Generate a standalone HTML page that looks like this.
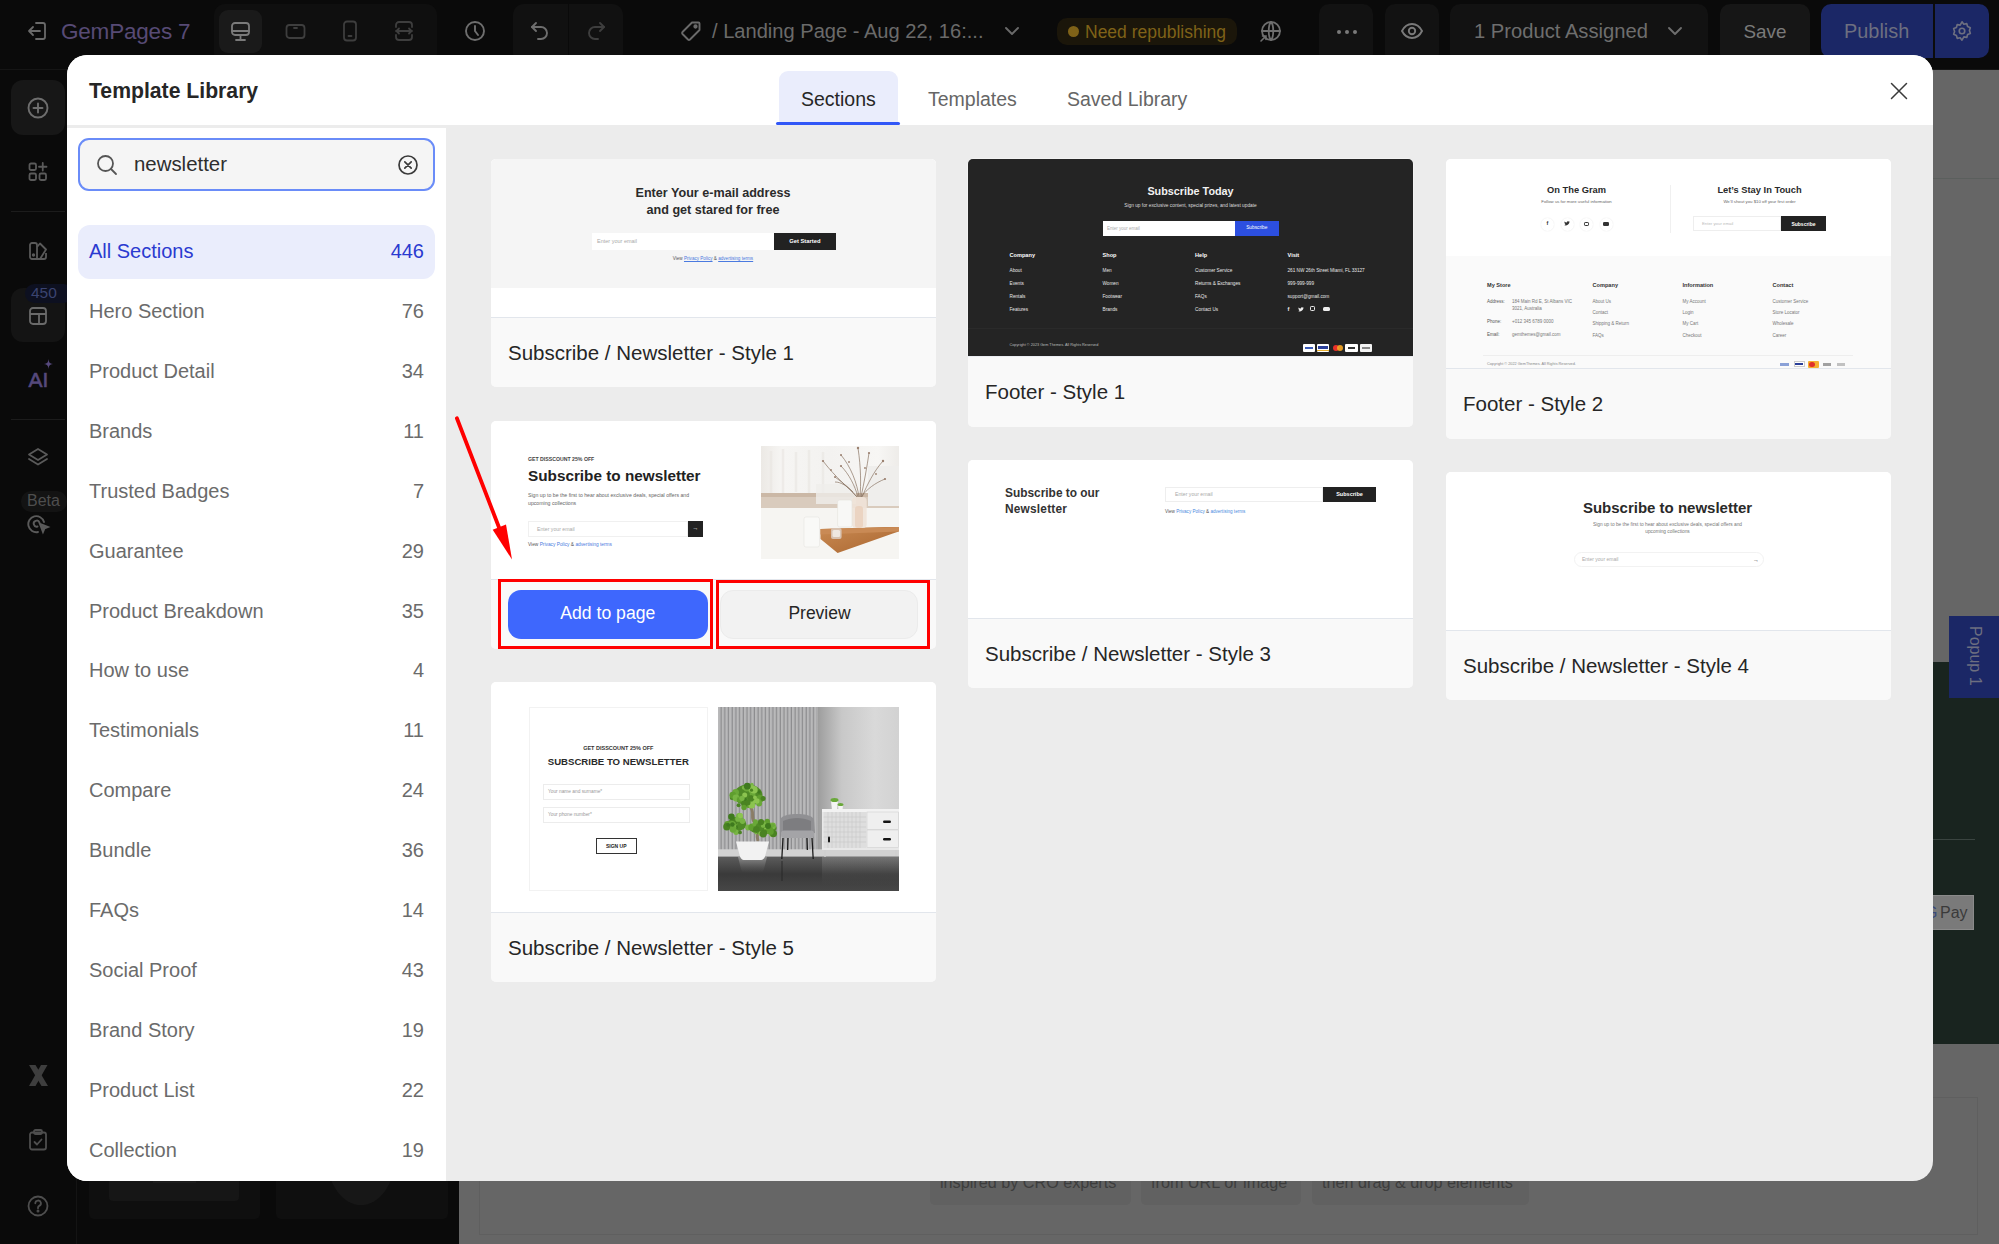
<!DOCTYPE html>
<html><head><meta charset="utf-8">
<style>
*{box-sizing:border-box;margin:0;padding:0}
html,body{width:1999px;height:1244px;overflow:hidden;background:#0a0a0a;font-family:"Liberation Sans",sans-serif}
.abs{position:absolute}
#top{left:0;top:0;width:1999px;height:70px;background:#0a0a0a;border-bottom:1px solid #151515}
#side{left:0;top:70px;width:77px;height:1174px;background:#0a0a0a;border-right:1px solid #141414}
#canvas{left:459px;top:70px;width:1540px;height:1174px;background:#666}
#modal{left:67px;top:55px;width:1866px;height:1126px;background:#ececec;border-radius:20px;overflow:hidden}
#mhead{left:0;top:0;width:1866px;height:70px;background:#fff}
#lpanel{left:0;top:73px;width:379px;height:1053px;background:#fff}
.tb{color:#2a2a2a}
.item{position:absolute;left:11px;width:357px;height:54px;font-size:20px;color:#6b6b6b;border-radius:12px}
.item span{position:absolute;top:15px}
.item .n{right:11px}
.item .l{left:11px}
.card{position:absolute;width:445px;background:#f9f9f9;border-radius:5px;overflow:hidden}
.card .img{position:absolute;left:0;top:0;width:100%;background:#fff}
.card .lab{position:absolute;left:0;width:100%;border-top:1px solid #e2e6ec;background:#f9f9f9}
.card .lab span{position:absolute;left:17px;font-size:20.5px;color:#262626;top:23.3px;white-space:nowrap}
</style></head><body>
<div id="top" class="abs">
  <svg class="abs" style="left:26px;top:20px" width="22" height="22" viewBox="0 0 22 22" fill="none" stroke="#6a6a6a" stroke-width="1.8" stroke-linecap="round" stroke-linejoin="round"><path d="M10 3h7a2 2 0 0 1 2 2v12a2 2 0 0 1-2 2h-7"/><path d="M14 11H3M7 7l-4 4 4 4"/></svg>
  <div class="abs" style="left:61px;top:18.5px;font-size:22.5px;color:#574a75;letter-spacing:-0.2px">GemPages 7</div>
  <div class="abs" style="left:214px;top:4px;width:223px;height:60px;background:#0f0f0f;border-radius:11px"></div>
  <div class="abs" style="left:219px;top:10px;width:43px;height:43px;background:#1a1a1a;border-radius:9px"></div>
  <svg class="abs" style="left:230px;top:21px" width="21" height="21" viewBox="0 0 21 21" fill="none" stroke="#7a7a7a" stroke-width="1.8" stroke-linecap="round" stroke-linejoin="round"><rect x="2" y="2" width="17" height="12" rx="3"/><path d="M2 10h17M10.5 14v4M6 19h9"/></svg>
  <svg class="abs" style="left:285px;top:21px" width="21" height="21" viewBox="0 0 21 21" fill="none" stroke="#3e3e3e" stroke-width="1.8" stroke-linecap="round"><rect x="1.5" y="4" width="18" height="13" rx="3"/><path d="M9 7h3"/></svg>
  <svg class="abs" style="left:340px;top:20px" width="20" height="22" viewBox="0 0 20 22" fill="none" stroke="#3e3e3e" stroke-width="1.8" stroke-linecap="round"><rect x="4" y="1.5" width="12" height="19" rx="3"/><path d="M8.5 16h3"/></svg>
  <svg class="abs" style="left:393px;top:20px" width="22" height="22" viewBox="0 0 22 22" fill="none" stroke="#3e3e3e" stroke-width="1.8" stroke-linecap="round" stroke-linejoin="round"><path d="M3 7V5a3 3 0 0 1 3-3h10a3 3 0 0 1 3 3v2M3 15v2a3 3 0 0 0 3 3h10a3 3 0 0 0 3-3v-2M3 11h16M6 8.5 3.5 11 6 13.5M16 8.5l2.5 2.5-2.5 2.5"/></svg>
  <svg class="abs" style="left:464px;top:20px" width="22" height="22" viewBox="0 0 22 22" fill="none" stroke="#6e6e6e" stroke-width="1.9" stroke-linecap="round"><circle cx="11" cy="11" r="9"/><path d="M11 6v5l3 4"/></svg>
  <div class="abs" style="left:513px;top:4px;width:110px;height:60px;background:#111;border-radius:11px"></div>
  <div class="abs" style="left:567.5px;top:4px;width:1px;height:60px;background:#0a0a0a"></div>
  <svg class="abs" style="left:529px;top:20px" width="22" height="22" viewBox="0 0 22 22" fill="none" stroke="#6e6e6e" stroke-width="1.9" stroke-linecap="round" stroke-linejoin="round"><path d="M7 3 3 7l4 4"/><path d="M3 7h9a6 6 0 0 1 0 12H9"/></svg>
  <svg class="abs" style="left:585px;top:20px" width="22" height="22" viewBox="0 0 22 22" fill="none" stroke="#3e3e3e" stroke-width="1.9" stroke-linecap="round" stroke-linejoin="round"><path d="M15 3l4 4-4 4"/><path d="M19 7h-9a6 6 0 0 0 0 12h3"/></svg>
  <svg class="abs" style="left:680px;top:20px" width="22" height="22" viewBox="0 0 22 22" fill="none" stroke="#6a6a6a" stroke-width="1.9" stroke-linejoin="round"><path d="M12 2.5h6.5a1 1 0 0 1 1 1V10L10 19.5a1.5 1.5 0 0 1-2 0L2.5 14a1.5 1.5 0 0 1 0-2z"/><circle cx="15.5" cy="6.5" r="1.2" fill="#6a6a6a"/></svg>
  <div class="abs" style="left:712px;top:19.5px;font-size:20.1px;color:#6a6a6a;white-space:nowrap">/ Landing Page - Aug 22, 16:...</div>
  <svg class="abs" style="left:1003px;top:24px" width="18" height="14" viewBox="0 0 18 14" fill="none" stroke="#6a6a6a" stroke-width="1.9" stroke-linecap="round" stroke-linejoin="round"><path d="M3 4l6 6 6-6"/></svg>
  <div class="abs" style="left:1057px;top:18px;width:180px;height:27px;background:#1b160a;border-radius:10px"></div>
  <div class="abs" style="left:1068px;top:26px;width:11px;height:11px;background:#7f6218;border-radius:50%"></div>
  <div class="abs" style="left:1085px;top:21.5px;font-size:17.5px;color:#7f6218;white-space:nowrap">Need republishing</div>
  <svg class="abs" style="left:1259px;top:20px" width="23" height="23" viewBox="0 0 23 23" fill="none" stroke="#6e6e6e" stroke-width="1.8" stroke-linecap="round"><circle cx="12" cy="11" r="9"/><path d="M3 11h18M12 2c-3 3-3 15 0 18M12 2c3 3 3 15 0 18"/><path d="M2 21l5-5M3.5 16h3.5v3.5" stroke-width="1.6"/></svg>
  <div class="abs" style="left:1319px;top:4px;width:54px;height:60px;background:#121212;border-radius:10px"></div>
  <div class="abs" style="left:1337px;top:30px;width:4px;height:4px;background:#7a7a7a;border-radius:50%;box-shadow:8px 0 0 #7a7a7a,16px 0 0 #7a7a7a"></div>
  <div class="abs" style="left:1385px;top:4px;width:54px;height:60px;background:#121212;border-radius:10px"></div>
  <svg class="abs" style="left:1400px;top:20px" width="24" height="22" viewBox="0 0 24 22" fill="none" stroke="#7a7a7a" stroke-width="1.9"><path d="M2 11c2.5-5 6-7 10-7s7.5 2 10 7c-2.5 5-6 7-10 7s-7.5-2-10-7z"/><circle cx="12" cy="11" r="3.2"/></svg>
  <div class="abs" style="left:1450px;top:4px;width:258px;height:60px;background:#121212;border-radius:10px"></div>
  <div class="abs" style="left:1474px;top:19.5px;font-size:20.2px;color:#6e6e6e;white-space:nowrap">1 Product Assigned</div>
  <svg class="abs" style="left:1666px;top:24px" width="18" height="14" viewBox="0 0 18 14" fill="none" stroke="#6e6e6e" stroke-width="1.9" stroke-linecap="round" stroke-linejoin="round"><path d="M3 4l6 6 6-6"/></svg>
  <div class="abs" style="left:1720px;top:4px;width:90px;height:60px;background:#161616;border-radius:10px"></div>
  <div class="abs" style="left:1743.5px;top:20.5px;font-size:18.85px;color:#7a7a7a">Save</div>
  <div class="abs" style="left:1821px;top:4px;width:168px;height:54px;background:#1b2766;border-radius:10px"></div>
  <div class="abs" style="left:1933px;top:4px;width:2px;height:54px;background:#0c0c0c"></div>
  <div class="abs" style="left:1844px;top:19.5px;font-size:19.9px;color:#6d6f80">Publish</div>
  <svg class="abs" style="left:1951px;top:20px" width="22" height="22" viewBox="0 0 24 24" fill="none" stroke="#6d6f80" stroke-width="1.8" stroke-linejoin="round"><circle cx="12" cy="12" r="3"/><path d="M12 2l2 2.6 3.2-.6.9 3.1 3 1.3-1 3.1 1 3.1-3 1.3-.9 3.1-3.2-.6L12 22l-2-2.6-3.2.6-.9-3.1-3-1.3 1-3.1-1-3.1 3-1.3.9-3.1 3.2.6z"/></svg>
</div>
<div id="side" class="abs">
  <div class="abs" style="left:11px;top:10px;width:54px;height:55px;background:#171717;border-radius:12px"></div>
  <svg class="abs" style="left:27px;top:27px" width="22" height="22" viewBox="0 0 22 22" fill="none" stroke="#6e6e6e" stroke-width="1.9" stroke-linecap="round"><circle cx="11" cy="11" r="9.5"/><path d="M11 6.5v9M6.5 11h9"/></svg>
  <svg class="abs" style="left:28px;top:92px" width="20" height="20" viewBox="0 0 20 20" fill="none" stroke="#5a5a5a" stroke-width="1.8" stroke-linejoin="round" stroke-linecap="round"><rect x="1.5" y="1.5" width="6.5" height="6.5" rx="1.5"/><rect x="1.5" y="11.5" width="6.5" height="6.5" rx="1.5"/><rect x="11.5" y="11.5" width="6.5" height="6.5" rx="1.5"/><path d="M14.75 1v7.5M11 4.75h7.5"/></svg>
  <div class="abs" style="left:11px;top:141px;width:54px;height:1px;background:#1c1c1c"></div>
  <svg class="abs" style="left:28px;top:171px" width="20" height="20" viewBox="0 0 20 20" fill="none" stroke="#5a5a5a" stroke-width="1.8" stroke-linejoin="round"><path d="M2 4a2 2 0 0 1 2-2h3a2 2 0 0 1 2 2v14H4a2 2 0 0 1-2-2z"/><path d="M9 6l3-3.5 6 6L12 18H9"/><path d="M9 18h7a2 2 0 0 0 2-2v-4"/><circle cx="5.5" cy="14" r="0.8" fill="#5a5a5a"/></svg>
  <div class="abs" style="left:11px;top:218px;width:54px;height:54px;background:#141414;border-radius:12px"></div>
  <div class="abs" style="left:25px;top:214px;width:48px;height:19px;background:#0d1020;border-radius:10px"></div>
  <div class="abs" style="left:31px;top:214px;font-size:15.5px;color:#3b4470">450</div>
  <svg class="abs" style="left:28px;top:236px" width="20" height="20" viewBox="0 0 20 20" fill="none" stroke="#6a6a6a" stroke-width="1.8" stroke-linejoin="round"><rect x="2" y="2" width="16" height="16" rx="3"/><path d="M2 8h16M11 8v10"/></svg>
  <div class="abs" style="left:28.5px;top:298px;font-size:21px;color:#56497d;-webkit-text-stroke:0.6px #56497d">AI</div>
  <svg class="abs" style="left:44px;top:289px" width="9" height="10" viewBox="0 0 9 10"><path d="M4.5 0C5 3.5 5.5 4.5 9 5 5.5 5.5 5 6.5 4.5 10 4 6.5 3.5 5.5 0 5 3.5 4.5 4 3.5 4.5 0z" fill="#56497d"/></svg>
  <div class="abs" style="left:11px;top:349px;width:54px;height:1px;background:#1c1c1c"></div>
  <svg class="abs" style="left:27px;top:377px" width="22" height="22" viewBox="0 0 22 22" fill="none" stroke="#5a5a5a" stroke-width="1.8" stroke-linejoin="round" stroke-linecap="round"><path d="M11 2l9 5.5-9 5.5-9-5.5z"/><path d="M2 12l9 5.5 9-5.5"/></svg>
  <div class="abs" style="left:21px;top:421px;width:46px;height:21px;background:#131313;border-radius:10px"></div>
  <div class="abs" style="left:27px;top:422px;font-size:16px;color:#4e4e4e">Beta</div>
  <svg class="abs" style="left:27px;top:443px" width="24" height="22" viewBox="0 0 24 22" fill="none" stroke="#5a5a5a" stroke-width="1.9" stroke-linecap="round"><path d="M17 9a8 8 0 1 0-6 10"/><path d="M12.5 9.5a3 3 0 1 0-2 4"/><path d="M13 11l8 3-3.5 1.5L16 19z" fill="#5a5a5a"/></svg>
  <svg class="abs" style="left:28.5px;top:994.5px" width="19" height="21" viewBox="0 0 19 21"><path d="M0 0h6.5l12.5 21h-6.5z" fill="#3e3e3e"/><path d="M12 0h6.5L6.5 21H0z" fill="#3e3e3e"/></svg>
  <svg class="abs" style="left:28px;top:1059px" width="20" height="22" viewBox="0 0 20 22" fill="none" stroke="#4e4e4e" stroke-width="1.8" stroke-linejoin="round" stroke-linecap="round"><rect x="2" y="3.5" width="16" height="17" rx="2"/><rect x="6" y="1" width="8" height="4" rx="1.5"/><path d="M6.5 13l2.5 2.5 4.5-5"/></svg>
  <svg class="abs" style="left:27px;top:1125px" width="22" height="22" viewBox="0 0 22 22" fill="none" stroke="#4e4e4e" stroke-width="1.8" stroke-linecap="round"><circle cx="11" cy="11" r="9.5"/><path d="M8.3 8.3a2.8 2.8 0 1 1 3.9 2.6c-.8.4-1.2 1-1.2 1.8v.6"/><circle cx="11" cy="16" r="0.6" fill="#4e4e4e"/></svg>
</div>
<div class="abs" style="left:77px;top:1180px;width:382px;height:64px;background:#0a0a0a"></div>
<div class="abs" style="left:89px;top:1120px;width:171px;height:99px;background:#0f0f0f;border-radius:5px"></div>
<div class="abs" style="left:109px;top:1120px;width:130px;height:81px;background:#161616;border-radius:4px"></div>
<div class="abs" style="left:153px;top:1180px;width:43px;height:3px;background:#1c1c1c"></div>
<div class="abs" style="left:276px;top:1120px;width:172px;height:99px;background:#0f0f0f;border-radius:5px"></div>
<div class="abs" style="left:327px;top:1110px;width:68px;height:95px;background:#171717;border-radius:50%"></div>
<div id="canvas" class="abs">
  <div class="abs" style="left:0;top:107.5px;width:1540px;height:1.5px;background:#5b5f5d"></div>
    <div class="abs" style="left:0;top:592px;width:1540px;height:382px;background:#19241f"></div>
  <div class="abs" style="left:1300px;top:769px;width:216px;height:1px;background:#3a4440"></div>
  <div class="abs" style="left:1490px;top:546px;width:50px;height:82px;background:#1b2766"></div>
  <div class="abs" style="left:1497px;top:556px;font-size:16px;color:#6d6f80;transform:rotate(90deg);transform-origin:left top;left:1525px;white-space:nowrap">Popup 1</div>
  <div class="abs" style="left:1420px;top:825px;width:95px;height:35px;background:#7a7a7a;border:1px solid #8a8a8a"></div>
  <div class="abs" style="left:1481px;top:834px;font-size:16px;color:#3a3a3a">Pay</div>
  <div class="abs" style="left:1466px;top:834px;font-size:16px;color:#3a4a7a">G</div>
  <div class="abs" style="left:20px;top:1027px;width:1499px;height:138px;border:1px solid #5f5f5f"></div>
  <div class="abs" style="left:471px;top:1090px;width:201px;height:45px;background:#616161;border-radius:5px"></div>
  <div class="abs" style="left:682px;top:1090px;width:160px;height:45px;background:#616161;border-radius:5px"></div>
  <div class="abs" style="left:853px;top:1090px;width:217px;height:45px;background:#616161;border-radius:5px"></div>
  <div class="abs" style="left:481px;top:1103px;font-size:16.2px;color:#3d3d3d;white-space:nowrap">inspired by CRO experts</div>
  <div class="abs" style="left:692px;top:1103px;font-size:16.2px;color:#3d3d3d;white-space:nowrap">from URL or image</div>
  <div class="abs" style="left:863px;top:1103px;font-size:16.2px;color:#3d3d3d;white-space:nowrap">then drag &amp; drop elements</div>
</div>

<div id="modal" class="abs">
  <div id="mhead" class="abs">
    <div class="abs" style="left:22px;top:23.5px;font-size:21.2px;color:#262626;font-weight:bold">Template Library</div>
    <svg class="abs" style="left:1822.5px;top:26.8px" width="18" height="18" viewBox="0 0 18 18" fill="none" stroke="#3a3a3a" stroke-width="1.5" stroke-linecap="round"><path d="M1.5 1.5l15 15M16.5 1.5l-15 15"/></svg>
    <div class="abs" style="left:712px;top:16.2px;width:119px;height:54px;background:#eaedfc;border-radius:9px 9px 0 0"></div>
    <div class="abs" style="left:709px;top:67px;width:124px;height:2.8px;background:#3157f7;border-radius:2px"></div>
    <div class="abs" style="left:734px;top:33px;font-size:19.5px;color:#262626">Sections</div>
    <div class="abs" style="left:861px;top:33px;font-size:19.5px;color:#666">Templates</div>
    <div class="abs" style="left:1000px;top:33px;font-size:19.5px;color:#666">Saved Library</div>
  </div>
  <div id="lpanel" class="abs">
    <div class="abs" style="left:11px;top:10px;width:357px;height:53px;border:2px solid #6a8cf8;border-radius:11px;background:#f5f5f5"></div>
    <svg class="abs" style="left:29px;top:26px" width="22" height="22" viewBox="0 0 22 22" fill="none" stroke="#555" stroke-width="1.8" stroke-linecap="round"><circle cx="9.5" cy="9.5" r="7.5"/><path d="M15 15l5 5"/></svg>
    <div class="abs" style="left:67px;top:25px;font-size:20.4px;color:#2e2e2e">newsletter</div>
    <svg class="abs" style="left:330px;top:26px" width="22" height="22" viewBox="0 0 22 22" fill="none" stroke="#3a3a3a" stroke-width="1.7" stroke-linecap="round"><circle cx="11" cy="11" r="9"/><path d="M7.8 7.8l6.4 6.4M14.2 7.8l-6.4 6.4"/></svg>
    <div class="item" style="top:97.00px;background:#eaedfc;color:#2a3ad0"><span class="l">All Sections</span><span class="n">446</span></div>
    <div class="item" style="top:156.92px"><span class="l">Hero Section</span><span class="n">76</span></div>
    <div class="item" style="top:216.84px"><span class="l">Product Detail</span><span class="n">34</span></div>
    <div class="item" style="top:276.76px"><span class="l">Brands</span><span class="n">11</span></div>
    <div class="item" style="top:336.68px"><span class="l">Trusted Badges</span><span class="n">7</span></div>
    <div class="item" style="top:396.60px"><span class="l">Guarantee</span><span class="n">29</span></div>
    <div class="item" style="top:456.52px"><span class="l">Product Breakdown</span><span class="n">35</span></div>
    <div class="item" style="top:516.44px"><span class="l">How to use</span><span class="n">4</span></div>
    <div class="item" style="top:576.36px"><span class="l">Testimonials</span><span class="n">11</span></div>
    <div class="item" style="top:636.28px"><span class="l">Compare</span><span class="n">24</span></div>
    <div class="item" style="top:696.20px"><span class="l">Bundle</span><span class="n">36</span></div>
    <div class="item" style="top:756.12px"><span class="l">FAQs</span><span class="n">14</span></div>
    <div class="item" style="top:816.04px"><span class="l">Social Proof</span><span class="n">43</span></div>
    <div class="item" style="top:875.96px"><span class="l">Brand Story</span><span class="n">19</span></div>
    <div class="item" style="top:935.88px"><span class="l">Product List</span><span class="n">22</span></div>
    <div class="item" style="top:995.80px"><span class="l">Collection</span><span class="n">19</span></div>
  </div>
</div>

<div class="card" style="left:491px;top:159px;height:228px"><div class="img" style="height:158px;background:#fff"></div><div class="lab" style="top:158px;height:70px"><span>Subscribe / Newsletter - Style 1</span></div></div>
<div class="abs" style="left:491px;top:159px;width:445px;height:129px;background:#f5f5f5;border-radius:5px 5px 0 0"></div>
<div class="abs" style="left:313px;width:800px;text-align:center;top:186.83px;font-size:12.6px;line-height:12.6px;color:#2b2b2b;font-weight:bold;white-space:nowrap;">Enter Your e-mail address</div>
<div class="abs" style="left:313px;width:800px;text-align:center;top:203.63px;font-size:12.6px;line-height:12.6px;color:#2b2b2b;font-weight:bold;white-space:nowrap;">and get stared for free</div>
<div class="abs" style="left:592px;top:232.5px;width:182px;height:17px;background:#fff;"></div>
<div class="abs" style="left:597px;top:238.84px;font-size:5.5px;line-height:5.5px;color:#aaa;white-space:nowrap;">Enter your email</div>
<div class="abs" style="left:774px;top:232.5px;width:61.5px;height:17px;background:#222;"></div>
<div class="abs" style="left:404.79999999999995px;width:800px;text-align:center;top:238.59px;font-size:5.8px;line-height:5.8px;color:#fff;font-weight:bold;white-space:nowrap;">Get Started</div>
<div class="abs" style="left:313px;width:800px;text-align:center;top:256.61px;font-size:4.6px;line-height:4.6px;color:#555;white-space:nowrap;">View <u style="color:#4a7ae0">Privacy Policy</u> &amp; <u style="color:#4a7ae0">advertising terms</u></div>
<div class="card" style="left:491px;top:421px;height:228px"><div class="img" style="height:158px;background:#fff"></div><div class="lab" style="top:158px;height:70px"></div></div>
<div class="abs" style="left:528px;top:456.90px;font-size:5.2px;line-height:5.2px;color:#444;font-weight:bold;white-space:nowrap;">GET DISSCOUNT 25% OFF</div>
<div class="abs" style="left:528px;top:468.35px;font-size:15.3px;line-height:15.3px;color:#222;font-weight:bold;white-space:nowrap;">Subscribe to newsletter</div>
<div class="abs" style="left:528px;top:492.60px;font-size:5.2px;line-height:5.2px;color:#666;white-space:nowrap;">Sign up to be the first to hear about exclusive deals, special offers and</div>
<div class="abs" style="left:528px;top:500.60px;font-size:5.2px;line-height:5.2px;color:#666;white-space:nowrap;">upcoming collections</div>
<div class="abs" style="left:528px;top:521px;width:160px;height:15.5px;background:#fff;border:1px solid #f0f0f0"></div>
<div class="abs" style="left:537px;top:526.60px;font-size:5.2px;line-height:5.2px;color:#aaa;white-space:nowrap;">Enter your email</div>
<div class="abs" style="left:688px;top:521px;width:15px;height:15.5px;background:#222;"></div>
<div class="abs" style="left:295.5px;width:800px;text-align:center;top:525.42px;font-size:6px;line-height:6px;color:#fff;white-space:nowrap;">&#8594;</div>
<div class="abs" style="left:528px;top:542.94px;font-size:4.8px;line-height:4.8px;color:#555;white-space:nowrap;">View <span style="color:#4a7ae0">Privacy Policy</span> &amp; <span style="color:#4a7ae0">advertising terms</span></div>
<svg class="abs" style="left:760.8px;top:445.5px" width="138" height="113" viewBox="0 0 138 113">
<defs>
<linearGradient id="cur" x1="0" x2="1"><stop offset="0" stop-color="#ece9e5"/><stop offset="0.15" stop-color="#f6f5f3"/><stop offset="0.5" stop-color="#f3f2f0"/><stop offset="0.85" stop-color="#f7f6f4"/><stop offset="1" stop-color="#eeece9"/></linearGradient>
<linearGradient id="wood" x1="0" y1="0" x2="1" y2="1"><stop offset="0" stop-color="#c98a52"/><stop offset="1" stop-color="#a9652f"/></linearGradient>
</defs>
<rect width="138" height="113" fill="#f5f4f1"/>
<rect width="138" height="50" fill="url(#cur)"/>
<path d="M10 5v42M22 3v44M35 6v40M48 4v43M62 6v41" stroke="#e9e6e2" stroke-width="2.5" opacity="0.6"/>
<rect y="47" width="138" height="15" fill="#d9cbbd"/>
<rect y="47" width="138" height="4" fill="#cbb8a6"/>
<rect x="107" y="20" width="31" height="40" fill="#efeeec"/>
<rect x="55" y="38" width="40" height="20" fill="#efeeeb" opacity="0.8"/>
<rect y="62" width="138" height="51" fill="#f6f5f2"/>
<g stroke="#8a7463" stroke-width="0.7" fill="none">
<path d="M97 51C94 40 88 28 80 20M98 51c-2-14-8-30-18-42M99 51C100 38 100 22 97 2M100 51c3-14 6-30 8-44M101 51c5-12 12-26 21-36M100 51c6-8 14-14 24-18M96 51c-6-8-14-14-22-20M95 50C88 42 75 32 62 15M92 46c-6-6-12-10-18-10"/>
</g>
<g fill="#9a7f6e">
<circle cx="80" cy="20" r="1.1"/><circle cx="97" cy="2" r="1.2"/><circle cx="108" cy="7" r="1.1"/><circle cx="122" cy="15" r="1.2"/><circle cx="124" cy="33" r="1.1"/><circle cx="62" cy="15" r="1.1"/><circle cx="74" cy="31" r="1"/><circle cx="80" cy="9" r="1"/><circle cx="88" cy="16" r="0.9"/><circle cx="104" cy="22" r="0.9"/><circle cx="115" cy="28" r="0.9"/><circle cx="70" cy="24" r="0.9"/>
</g>
<path d="M59.5 83l64.3-2h14v4.5l-6 2L76.6 107 59.5 93z" fill="url(#wood)"/>
<path d="M59.5 83l78.4-2v4.5l-78.4 3z" fill="#c98a55"/>
<rect x="91" y="51" width="14.7" height="31" rx="4" fill="#efe3d8" opacity="0.9"/>
<rect x="94" y="60" width="8" height="22" rx="3" fill="#e8cdb8" opacity="0.7"/>
<rect x="76.6" y="54" width="14.4" height="27" rx="2" fill="#f8f8f6" stroke="#e4e2de" stroke-width="0.6"/>
<rect x="43" y="71" width="15.5" height="30" rx="2" fill="#f9f9f7" stroke="#e6e4e0" stroke-width="0.6"/>
<rect x="70" y="82" width="10.6" height="11" rx="2" fill="#d8c2b0"/>
<rect x="71.5" y="84" width="7.6" height="7" rx="1.5" fill="#efe8e0"/>
</svg>
<div class="abs" style="left:507.6px;top:590px;width:200.5px;height:48.5px;background:#3e67fd;border-radius:13px"></div>
<div class="abs" style="left:207.79999999999995px;width:800px;text-align:center;top:605.40px;font-size:17.6px;line-height:17.6px;color:#fff;white-space:nowrap;">Add to page</div>
<div class="abs" style="left:719.8px;top:589.8px;width:198.7px;height:49.2px;background:#f2f2f2;border-radius:13px;border:1px solid #ebebeb"></div>
<div class="abs" style="left:419.5px;width:800px;text-align:center;top:605.49px;font-size:17.5px;line-height:17.5px;color:#262626;white-space:nowrap;">Preview</div>
<div class="abs" style="left:498px;top:578.6px;width:214.6px;height:70.2px;background:transparent;border:3.6px solid #ff0000"></div>
<div class="abs" style="left:716.2px;top:579.6px;width:213.7px;height:69px;background:transparent;border:3.6px solid #ff0000"></div>
<svg class="abs" style="left:440px;top:400px" width="100" height="180" viewBox="0 0 100 180"><path d="M16.9 18.3L60 130" stroke="#ff0000" stroke-width="3.8" stroke-linecap="round" fill="none"/><path d="M52.7 129.7 L72 159.5 L66 124.4 Z" fill="#ff0000"/></svg>
<div class="card" style="left:491px;top:682px;height:300px"><div class="img" style="height:230px;background:#fff"></div><div class="lab" style="top:230px;height:70px"><span>Subscribe / Newsletter - Style 5</span></div></div>
<div class="abs" style="left:528.5px;top:707px;width:179.5px;height:183.5px;background:#fff;border:1px solid #f2f2f2"></div>
<div class="abs" style="left:218.29999999999995px;width:800px;text-align:center;top:746.04px;font-size:5.5px;line-height:5.5px;color:#333;font-weight:bold;white-space:nowrap;">GET DISSCOUNT 25% OFF</div>
<div class="abs" style="left:218.29999999999995px;width:800px;text-align:center;top:757.37px;font-size:9.6px;line-height:9.6px;color:#2a2a2a;font-weight:bold;white-space:nowrap;">SUBSCRIBE TO NEWSLETTER</div>
<div class="abs" style="left:543px;top:784px;width:146.5px;height:16px;background:#fff;border:1px solid #ececec"></div>
<div class="abs" style="left:548px;top:789.94px;font-size:4.8px;line-height:4.8px;color:#999;white-space:nowrap;">Your name and surname*</div>
<div class="abs" style="left:543px;top:807px;width:146.5px;height:16px;background:#fff;border:1px solid #ececec"></div>
<div class="abs" style="left:548px;top:812.94px;font-size:4.8px;line-height:4.8px;color:#999;white-space:nowrap;">Your phone number*</div>
<div class="abs" style="left:596px;top:837.5px;width:40.5px;height:16px;background:#fff;border:1px solid #333"></div>
<div class="abs" style="left:216.20000000000005px;width:800px;text-align:center;top:843.77px;font-size:5px;line-height:5px;color:#222;font-weight:bold;white-space:nowrap;">SIGN UP</div>
<svg class="abs" style="left:717.7px;top:707.2px" width="181" height="184" viewBox="0 0 181 184">
<defs>
<pattern id="stp" width="3.7" height="10" patternUnits="userSpaceOnUse"><rect width="3.7" height="10" fill="#b9b9ba"/><rect x="2.5" width="1.2" height="10" fill="#8c8c8e"/></pattern>
<linearGradient id="wallr" x1="0" x2="1"><stop offset="0" stop-color="#9c9c9c"/><stop offset="0.3" stop-color="#c8c8c8"/><stop offset="0.7" stop-color="#d9d9d9"/><stop offset="1" stop-color="#d2d2d2"/></linearGradient>
<linearGradient id="flr" x1="0" y1="0" x2="0" y2="1"><stop offset="0" stop-color="#5c5c5c"/><stop offset="0.5" stop-color="#3a3a3a"/><stop offset="1" stop-color="#474747"/></linearGradient>
<radialGradient id="leaf"><stop offset="0" stop-color="#8cc44e"/><stop offset="0.6" stop-color="#5c9a2c"/><stop offset="1" stop-color="#4a8424" stop-opacity="0.85"/></radialGradient>
</defs>
<rect width="99.2" height="143" fill="url(#stp)"/>
<rect x="99.2" width="82" height="143" fill="url(#wallr)"/>
<rect y="142.3" width="181" height="7.2" fill="#d2d2d2"/>
<rect y="149.5" width="181" height="35" fill="url(#flr)"/>
<defs><linearGradient id="rf" x1="0" y1="0" x2="0" y2="1"><stop offset="0" stop-color="#9a9a9a" stop-opacity="0.8"/><stop offset="1" stop-color="#5a5a5a" stop-opacity="0"/></linearGradient></defs><path d="M20 150h29l-3 12c-1 3-3 4-5 4h-13c-2 0-4-1-5-4z" fill="url(#rf)"/>
<rect x="63" y="154" width="2" height="20" fill="#222" opacity="0.4"/>
<rect x="104" y="150" width="77" height="28" fill="url(#rf)" opacity="0.5"/>
<path d="M40 134c-3-8 3-12-3-18s2-10-7-19" stroke="#8a7d66" stroke-width="3" fill="none"/>
<ellipse cx="30" cy="88" rx="14.45" ry="10.4" fill="#4f8a26"/>
<circle cx="27.0" cy="92.5" r="1.7" fill="#3f7a1e"/>
<circle cx="32.3" cy="84.4" r="1.7" fill="#6aa838"/>
<circle cx="26.7" cy="87.9" r="2.5" fill="#8cc450"/>
<circle cx="30.7" cy="97.6" r="3.4" fill="#5f9e2e"/>
<circle cx="35.7" cy="92.3" r="2.9" fill="#3f7a1e"/>
<circle cx="42.0" cy="91.8" r="3.7" fill="#5f9e2e"/>
<circle cx="45.1" cy="91.5" r="2.5" fill="#4a8322"/>
<circle cx="17.6" cy="85.5" r="3.4" fill="#6aa838"/>
<circle cx="35.5" cy="97.0" r="2.0" fill="#3f7a1e"/>
<circle cx="41.7" cy="94.3" r="1.7" fill="#6aa838"/>
<circle cx="33.8" cy="98.3" r="3.3" fill="#8cc450"/>
<circle cx="14.0" cy="90.7" r="2.3" fill="#4a8322"/>
<circle cx="33.9" cy="77.6" r="1.8" fill="#78b544"/>
<circle cx="26.3" cy="96.7" r="3.2" fill="#4a8322"/>
<circle cx="26.0" cy="100.5" r="2.7" fill="#5f9e2e"/>
<circle cx="35.1" cy="94.5" r="2.5" fill="#8cc450"/>
<circle cx="34.6" cy="87.1" r="2.9" fill="#6aa838"/>
<circle cx="36.8" cy="82.9" r="2.4" fill="#3f7a1e"/>
<circle cx="14.8" cy="88.2" r="3.4" fill="#5f9e2e"/>
<circle cx="41.0" cy="85.0" r="1.7" fill="#3f7a1e"/>
<circle cx="28.9" cy="80.8" r="3.8" fill="#6aa838"/>
<circle cx="34.0" cy="81.8" r="3.6" fill="#8cc450"/>
<circle cx="20.6" cy="98.3" r="2.0" fill="#4a8322"/>
<circle cx="33.1" cy="90.1" r="1.9" fill="#4a8322"/>
<circle cx="30.2" cy="96.1" r="1.8" fill="#8cc450"/>
<circle cx="18.0" cy="91.0" r="3.4" fill="#78b544"/>
<circle cx="35.9" cy="82.8" r="3.8" fill="#8cc450"/>
<circle cx="25.7" cy="80.7" r="1.9" fill="#78b544"/>
<circle cx="33.7" cy="93.6" r="1.6" fill="#78b544"/>
<circle cx="33.5" cy="83.2" r="1.6" fill="#4a8322"/>
<circle cx="21.0" cy="91.9" r="2.3" fill="#6aa838"/>
<circle cx="41.1" cy="96.5" r="3.0" fill="#6aa838"/>
<circle cx="29.3" cy="79.2" r="3.4" fill="#3f7a1e"/>
<circle cx="21.6" cy="93.1" r="2.7" fill="#5f9e2e"/>
<circle cx="24.0" cy="91.3" r="2.6" fill="#78b544"/>
<circle cx="40.2" cy="94.4" r="1.6" fill="#5f9e2e"/>
<circle cx="33.1" cy="91.4" r="3.0" fill="#4a8322"/>
<circle cx="37.0" cy="90.5" r="1.9" fill="#8cc450"/>
<circle cx="29.9" cy="95.7" r="2.6" fill="#4a8322"/>
<circle cx="38.9" cy="94.0" r="2.7" fill="#8cc450"/>
<ellipse cx="19" cy="117" rx="9.35" ry="7.2" fill="#4f8a26"/>
<circle cx="17.4" cy="120.2" r="2.4" fill="#3f7a1e"/>
<circle cx="18.1" cy="125.2" r="2.7" fill="#78b544"/>
<circle cx="22.0" cy="125.4" r="1.9" fill="#4a8322"/>
<circle cx="17.3" cy="116.6" r="2.3" fill="#6aa838"/>
<circle cx="16.9" cy="114.9" r="2.7" fill="#4a8322"/>
<circle cx="24.5" cy="114.1" r="2.8" fill="#78b544"/>
<circle cx="20.1" cy="111.9" r="2.9" fill="#78b544"/>
<circle cx="21.3" cy="109.4" r="3.4" fill="#78b544"/>
<circle cx="22.9" cy="110.0" r="2.0" fill="#78b544"/>
<circle cx="9.6" cy="117.3" r="3.3" fill="#5f9e2e"/>
<circle cx="14.2" cy="117.7" r="3.7" fill="#6aa838"/>
<circle cx="8.9" cy="119.8" r="3.7" fill="#4a8322"/>
<circle cx="15.6" cy="120.2" r="2.6" fill="#78b544"/>
<circle cx="15.0" cy="122.3" r="3.4" fill="#6aa838"/>
<circle cx="10.2" cy="117.9" r="1.8" fill="#3f7a1e"/>
<circle cx="13.4" cy="109.7" r="3.3" fill="#3f7a1e"/>
<circle cx="14.4" cy="117.5" r="2.3" fill="#3f7a1e"/>
<circle cx="22.4" cy="108.6" r="2.6" fill="#8cc450"/>
<ellipse cx="45" cy="121" rx="13.6" ry="6.4" fill="#4f8a26"/>
<circle cx="44.8" cy="118.7" r="2.0" fill="#78b544"/>
<circle cx="49.3" cy="123.2" r="3.4" fill="#8cc450"/>
<circle cx="53.8" cy="126.8" r="3.0" fill="#8cc450"/>
<circle cx="38.0" cy="125.8" r="1.6" fill="#78b544"/>
<circle cx="49.2" cy="114.5" r="2.8" fill="#5f9e2e"/>
<circle cx="54.6" cy="118.9" r="3.4" fill="#78b544"/>
<circle cx="46.9" cy="124.9" r="2.7" fill="#4a8322"/>
<circle cx="45.8" cy="116.4" r="2.5" fill="#6aa838"/>
<circle cx="55.4" cy="126.6" r="3.6" fill="#4a8322"/>
<circle cx="37.5" cy="114.8" r="2.5" fill="#6aa838"/>
<circle cx="54.9" cy="118.2" r="1.9" fill="#6aa838"/>
<circle cx="30.1" cy="120.5" r="2.9" fill="#78b544"/>
<circle cx="46.0" cy="117.9" r="2.6" fill="#78b544"/>
<circle cx="43.1" cy="115.1" r="3.1" fill="#4a8322"/>
<circle cx="34.1" cy="119.9" r="3.5" fill="#5f9e2e"/>
<circle cx="51.6" cy="122.2" r="3.3" fill="#5f9e2e"/>
<circle cx="33.0" cy="120.7" r="2.6" fill="#5f9e2e"/>
<circle cx="36.4" cy="117.3" r="2.0" fill="#6aa838"/>
<circle cx="43.1" cy="126.6" r="2.7" fill="#8cc450"/>
<circle cx="45.2" cy="126.8" r="3.6" fill="#4a8322"/>
<circle cx="50.6" cy="118.8" r="1.9" fill="#8cc450"/>
<circle cx="52.7" cy="124.7" r="3.1" fill="#5f9e2e"/>
<circle cx="38.4" cy="122.6" r="3.3" fill="#4a8322"/>
<circle cx="50.0" cy="119.1" r="3.0" fill="#3f7a1e"/>
<path d="M18 134.5h33l-4 15c-1 3-3 3.5-5 3.5h-15c-2 0-4-.5-5-3.5z" fill="#f2f2f2"/>
<path d="M62 112c3-4 10-5 17-5s14 1 17 5l1 14H62z" fill="#909093"/>
<path d="M65 114c4-2 10-3 14-3s10 1 14 3v10H65z" fill="#7d7d80"/>
<rect x="63" y="123.5" width="33" height="7.5" rx="3" fill="#a4a4a7"/>
<path d="M65 131l-1.2 21M94 131l1.2 21M70 131l-.4 12M89 131l.4 12" stroke="#1c1c1c" stroke-width="1.3"/>
<rect x="104" y="102" width="77" height="41" fill="#e8e8e8"/>
<rect x="104" y="102" width="77" height="3" fill="#f2f2f2"/>
<rect x="105.6" y="105" width="42.6" height="36" fill="#dedede"/>
<path d="M110 105v36M114 105v36M118 105v36M122 105v36M126 105v36M130 105v36M134 105v36M138 105v36M142 105v36M105.6 110h42.6M105.6 115h42.6M105.6 120h42.6M105.6 125h42.6M105.6 130h42.6M105.6 135h42.6" stroke="#c8c8c8" stroke-width="0.6"/>
<rect x="149" y="105" width="31.4" height="17.5" fill="#efefef" stroke="#d0d0d0" stroke-width="0.6"/>
<rect x="149" y="123" width="31.4" height="17.5" fill="#efefef" stroke="#d0d0d0" stroke-width="0.6"/>
<rect x="165" y="113.5" width="8" height="2.4" rx="1.2" fill="#151515"/>
<rect x="165" y="131" width="8" height="2.4" rx="1.2" fill="#151515"/>
<rect x="110" y="129.5" width="2" height="6" rx="1" fill="#151515"/>
<path d="M107 143v7M178 143v6" stroke="#cfcfcf" stroke-width="1.5"/>
<path d="M113 94h7l-1 9h-5z" fill="#f4f4f4"/>
<path d="M120 98h5l-.5 5h-4z" fill="#f4f4f4"/>
<ellipse cx="116.5" cy="93" rx="4" ry="2" fill="#6aa83a"/>
<ellipse cx="122.5" cy="97.5" rx="3" ry="1.6" fill="#6aa83a"/>
</svg>
<div class="card" style="left:968px;top:159px;height:268px"><div class="img" style="height:197px;background:#242424"></div><div class="lab" style="top:197px;height:71px"><span>Footer - Style 1</span></div></div>
<div class="abs" style="left:968px;top:159px;width:445px;height:197px;border-radius:5px 5px 0 0;background:#242424;box-shadow:0 0 0 0.5px rgba(255,255,255,.6)"></div>
<div class="abs" style="left:790.5px;width:800px;text-align:center;top:185.66px;font-size:10.8px;line-height:10.8px;color:#f2f2f2;font-weight:bold;white-space:nowrap;">Subscribe Today</div>
<div class="abs" style="left:790.5px;width:800px;text-align:center;top:204.44px;font-size:4.8px;line-height:4.8px;color:#ddd;white-space:nowrap;">Sign up for exclusive content, special prizes, and latest update</div>
<div class="abs" style="left:1102.5px;top:220.5px;width:132px;height:15.5px;background:#fff;"></div>
<div class="abs" style="left:1107px;top:226.69px;font-size:4.5px;line-height:4.5px;color:#aaa;white-space:nowrap;">Enter your email</div>
<div class="abs" style="left:1234.5px;top:220.5px;width:44.5px;height:15.5px;background:#2c4fe0;"></div>
<div class="abs" style="left:856.8px;width:800px;text-align:center;top:226.44px;font-size:4.8px;line-height:4.8px;color:#fff;white-space:nowrap;">Subscribe</div>
<div class="abs" style="left:1009.5px;top:252.76px;font-size:5.6px;line-height:5.6px;color:#fff;font-weight:bold;white-space:nowrap;">Company</div>
<div class="abs" style="left:1009.5px;top:268.52px;font-size:4.7px;line-height:4.7px;color:#e8e8e8;white-space:nowrap;">About</div>
<div class="abs" style="left:1009.5px;top:281.72px;font-size:4.7px;line-height:4.7px;color:#e8e8e8;white-space:nowrap;">Events</div>
<div class="abs" style="left:1009.5px;top:294.92px;font-size:4.7px;line-height:4.7px;color:#e8e8e8;white-space:nowrap;">Rentals</div>
<div class="abs" style="left:1009.5px;top:308.12px;font-size:4.7px;line-height:4.7px;color:#e8e8e8;white-space:nowrap;">Features</div>
<div class="abs" style="left:1102.5px;top:252.76px;font-size:5.6px;line-height:5.6px;color:#fff;font-weight:bold;white-space:nowrap;">Shop</div>
<div class="abs" style="left:1102.5px;top:268.52px;font-size:4.7px;line-height:4.7px;color:#e8e8e8;white-space:nowrap;">Men</div>
<div class="abs" style="left:1102.5px;top:281.72px;font-size:4.7px;line-height:4.7px;color:#e8e8e8;white-space:nowrap;">Women</div>
<div class="abs" style="left:1102.5px;top:294.92px;font-size:4.7px;line-height:4.7px;color:#e8e8e8;white-space:nowrap;">Footwear</div>
<div class="abs" style="left:1102.5px;top:308.12px;font-size:4.7px;line-height:4.7px;color:#e8e8e8;white-space:nowrap;">Brands</div>
<div class="abs" style="left:1195px;top:252.76px;font-size:5.6px;line-height:5.6px;color:#fff;font-weight:bold;white-space:nowrap;">Help</div>
<div class="abs" style="left:1195px;top:268.52px;font-size:4.7px;line-height:4.7px;color:#e8e8e8;white-space:nowrap;">Customer Service</div>
<div class="abs" style="left:1195px;top:281.72px;font-size:4.7px;line-height:4.7px;color:#e8e8e8;white-space:nowrap;">Returns &amp; Exchanges</div>
<div class="abs" style="left:1195px;top:294.92px;font-size:4.7px;line-height:4.7px;color:#e8e8e8;white-space:nowrap;">FAQs</div>
<div class="abs" style="left:1195px;top:308.12px;font-size:4.7px;line-height:4.7px;color:#e8e8e8;white-space:nowrap;">Contact Us</div>
<div class="abs" style="left:1287.5px;top:252.76px;font-size:5.6px;line-height:5.6px;color:#fff;font-weight:bold;white-space:nowrap;">Visit</div>
<div class="abs" style="left:1287.5px;top:268.52px;font-size:4.7px;line-height:4.7px;color:#e8e8e8;white-space:nowrap;">261 NW 26th Street Miami, FL 33127</div>
<div class="abs" style="left:1287.5px;top:281.72px;font-size:4.7px;line-height:4.7px;color:#e8e8e8;white-space:nowrap;">999-999-999</div>
<div class="abs" style="left:1287.5px;top:294.92px;font-size:4.7px;line-height:4.7px;color:#e8e8e8;white-space:nowrap;">support@gmail.com</div>
<div class="abs" style="left:888.5px;width:800px;text-align:center;top:306.59px;font-size:5.8px;line-height:5.8px;color:#eee;font-weight:bold;white-space:nowrap;">f</div>
<svg class="abs" style="left:1297.5px;top:306.5px" width="6" height="5" viewBox="0 0 6 5"><path d="M0 4c2 1 5 0 5.5-3L6 .5 5 .8C4 0 3 .2 2.8 1.5 1.8 1.4 1 1 .5.5c-.3 1 .2 1.8.8 2.2L.6 2.6c.1.8.6 1.2 1.2 1.3z" fill="#eee"/></svg>
<div class="abs" style="left:1310px;top:306px;width:5px;height:5px;background:transparent;border:1.3px solid #eee;border-radius:1.3px"></div>
<div class="abs" style="left:1323px;top:306.5px;width:6.5px;height:4.5px;background:#eee;border-radius:1.5px"></div>
<div class="abs" style="left:968px;top:328px;width:445px;height:1px;background:#2a2a2a;"></div>
<div class="abs" style="left:1009.5px;top:344.28px;font-size:3.8px;line-height:3.8px;color:#bbb;white-space:nowrap;">Copyright &#169; 2023 Gem Themes. All Rights Reserved</div>
<div class="abs" style="left:1302.5px;top:344px;width:12.5px;height:7.5px;background:#fff;border-radius:1px"></div>
<div class="abs" style="left:1304.5px;top:346.5px;width:8px;height:2.5px;background:#3a5bb8;"></div>
<div class="abs" style="left:1316.8px;top:344px;width:12.5px;height:7.5px;background:#fff;border-radius:1px"></div>
<div class="abs" style="left:1318px;top:346px;width:10px;height:3px;background:#2a3f9a;"></div>
<div class="abs" style="left:1316.8px;top:349.5px;width:12.5px;height:1.5px;background:#e8b030;"></div>
<div class="abs" style="left:1332.5px;top:344.5px;width:6.5px;height:6.5px;background:#e8302a;border-radius:50%"></div>
<div class="abs" style="left:1336.5px;top:344.5px;width:6.5px;height:6.5px;background:#f5a623;border-radius:50%;opacity:.9"></div>
<div class="abs" style="left:1345.4px;top:344px;width:12.5px;height:7.5px;background:#fff;border-radius:1px"></div>
<div class="abs" style="left:1348px;top:346.5px;width:7px;height:2.5px;background:#333;"></div>
<div class="abs" style="left:1359.7px;top:344px;width:12.5px;height:7.5px;background:#f4f4f4;border-radius:1px"></div>
<div class="abs" style="left:1362px;top:346.5px;width:8px;height:2.5px;background:#888;"></div>
<div class="card" style="left:968px;top:460px;height:228px"><div class="img" style="height:158px;background:#fff"></div><div class="lab" style="top:158px;height:70px"><span>Subscribe / Newsletter - Style 3</span></div></div>
<div class="abs" style="left:1005px;top:487.73px;font-size:11.9px;line-height:11.9px;color:#333;font-weight:bold;white-space:nowrap;">Subscribe to our</div>
<div class="abs" style="left:1005px;top:503.73px;font-size:11.9px;line-height:11.9px;color:#333;font-weight:bold;white-space:nowrap;letter-spacing:0.2px">Newsletter</div>
<div class="abs" style="left:1165px;top:486.5px;width:158px;height:15.5px;background:#fff;border:1px solid #eee"></div>
<div class="abs" style="left:1175px;top:492.10px;font-size:5.2px;line-height:5.2px;color:#aaa;white-space:nowrap;">Enter your email</div>
<div class="abs" style="left:1323px;top:486.5px;width:53px;height:15.5px;background:#222;"></div>
<div class="abs" style="left:949.5px;width:800px;text-align:center;top:492.14px;font-size:5.5px;line-height:5.5px;color:#fff;font-weight:bold;white-space:nowrap;">Subscribe</div>
<div class="abs" style="left:1165px;top:509.61px;font-size:4.6px;line-height:4.6px;color:#555;white-space:nowrap;">View <span style="color:#4a8ae0">Privacy Policy</span> &amp; <span style="color:#4a8ae0">advertising terms</span></div>
<div class="card" style="left:1446px;top:159px;height:280px"><div class="img" style="height:209px;background:#fff"></div><div class="lab" style="top:209px;height:71px"><span>Footer - Style 2</span></div></div>
<div class="abs" style="left:1446px;top:159px;width:445px;height:97px;background:#fff;border-radius:5px 5px 0 0"></div>
<div class="abs" style="left:1446px;top:256px;width:445px;height:112px;background:#fafafa;"></div>
<div class="abs" style="left:1176.5px;width:800px;text-align:center;top:185.93px;font-size:9.3px;line-height:9.3px;color:#2a2a2a;font-weight:bold;white-space:nowrap;">On The Gram</div>
<div class="abs" style="left:1176.5px;width:800px;text-align:center;top:199.96px;font-size:4.3px;line-height:4.3px;color:#666;white-space:nowrap;">Follow us for more useful information</div>
<div class="abs" style="left:1541.0px;top:217.5px;width:13px;height:13px;background:#fff;border-radius:50%;box-shadow:0 0 1.5px #e4e4e4"></div>
<div class="abs" style="left:1560.6px;top:217.5px;width:13px;height:13px;background:#fff;border-radius:50%;box-shadow:0 0 1.5px #e4e4e4"></div>
<div class="abs" style="left:1580.2px;top:217.5px;width:13px;height:13px;background:#fff;border-radius:50%;box-shadow:0 0 1.5px #e4e4e4"></div>
<div class="abs" style="left:1599.8px;top:217.5px;width:13px;height:13px;background:#fff;border-radius:50%;box-shadow:0 0 1.5px #e4e4e4"></div>
<div class="abs" style="left:1147.5px;width:800px;text-align:center;top:221.34px;font-size:5.5px;line-height:5.5px;color:#333;font-weight:bold;white-space:nowrap;">f</div>
<svg class="abs" style="left:1564px;top:221px" width="6" height="5" viewBox="0 0 6 5"><path d="M0 4c2 1 5 0 5.5-3L6 .5 5 .8C4 0 3 .2 2.8 1.5 1.8 1.4 1 1 .5.5c-.3 1 .2 1.8.8 2.2L.6 2.6c.1.8.6 1.2 1.2 1.3z" fill="#333"/></svg>
<div class="abs" style="left:1584px;top:221.5px;width:4.5px;height:4.5px;background:transparent;border:1.2px solid #333;border-radius:1.2px"></div>
<div class="abs" style="left:1603px;top:222px;width:6px;height:4px;background:#333;border-radius:1.3px"></div>
<div class="abs" style="left:1670px;top:185px;width:1px;height:48px;background:#f0f0f0;"></div>
<div class="abs" style="left:1359.5px;width:800px;text-align:center;top:185.93px;font-size:9.3px;line-height:9.3px;color:#2a2a2a;font-weight:bold;white-space:nowrap;">Let&#8217;s Stay In Touch</div>
<div class="abs" style="left:1359.5px;width:800px;text-align:center;top:199.96px;font-size:4.3px;line-height:4.3px;color:#666;white-space:nowrap;">We&#8217;ll shout you $10 off your first order</div>
<div class="abs" style="left:1693px;top:216.3px;width:88px;height:15px;background:#fff;border:1px solid #eee"></div>
<div class="abs" style="left:1702px;top:222.36px;font-size:4.3px;line-height:4.3px;color:#bbb;white-space:nowrap;">Enter your email</div>
<div class="abs" style="left:1781px;top:216.3px;width:45px;height:15px;background:#222;"></div>
<div class="abs" style="left:1403.5px;width:800px;text-align:center;top:222.27px;font-size:5px;line-height:5px;color:#fff;font-weight:bold;white-space:nowrap;">Subscribe</div>
<div class="abs" style="left:1487px;top:283.26px;font-size:5.6px;line-height:5.6px;color:#333;font-weight:bold;white-space:nowrap;">My Store</div>
<div class="abs" style="left:1592.5px;top:283.26px;font-size:5.6px;line-height:5.6px;color:#333;font-weight:bold;white-space:nowrap;">Company</div>
<div class="abs" style="left:1682.5px;top:283.26px;font-size:5.6px;line-height:5.6px;color:#333;font-weight:bold;white-space:nowrap;">Information</div>
<div class="abs" style="left:1772.5px;top:283.26px;font-size:5.6px;line-height:5.6px;color:#333;font-weight:bold;white-space:nowrap;">Contact</div>
<div class="abs" style="left:1487px;top:299.69px;font-size:4.5px;line-height:4.5px;color:#555;white-space:nowrap;">Address:</div>
<div class="abs" style="left:1512px;top:299.69px;font-size:4.5px;line-height:4.5px;color:#777;white-space:nowrap;">184 Main Rd E, St Albans VIC</div>
<div class="abs" style="left:1512px;top:307.19px;font-size:4.5px;line-height:4.5px;color:#777;white-space:nowrap;">3021, Australia</div>
<div class="abs" style="left:1487px;top:319.69px;font-size:4.5px;line-height:4.5px;color:#555;white-space:nowrap;">Phone:</div>
<div class="abs" style="left:1512px;top:319.69px;font-size:4.5px;line-height:4.5px;color:#777;white-space:nowrap;">+012 345 6789 0000</div>
<div class="abs" style="left:1487px;top:332.69px;font-size:4.5px;line-height:4.5px;color:#555;white-space:nowrap;">Email:</div>
<div class="abs" style="left:1512px;top:332.69px;font-size:4.5px;line-height:4.5px;color:#777;white-space:nowrap;">gemthemes@gmail.com</div>
<div class="abs" style="left:1592.5px;top:299.69px;font-size:4.5px;line-height:4.5px;color:#777;white-space:nowrap;">About Us</div>
<div class="abs" style="left:1592.5px;top:311.09px;font-size:4.5px;line-height:4.5px;color:#777;white-space:nowrap;">Contact</div>
<div class="abs" style="left:1592.5px;top:322.49px;font-size:4.5px;line-height:4.5px;color:#777;white-space:nowrap;">Shipping &amp; Return</div>
<div class="abs" style="left:1592.5px;top:333.89px;font-size:4.5px;line-height:4.5px;color:#777;white-space:nowrap;">FAQs</div>
<div class="abs" style="left:1682.5px;top:299.69px;font-size:4.5px;line-height:4.5px;color:#777;white-space:nowrap;">My Account</div>
<div class="abs" style="left:1682.5px;top:311.09px;font-size:4.5px;line-height:4.5px;color:#777;white-space:nowrap;">Login</div>
<div class="abs" style="left:1682.5px;top:322.49px;font-size:4.5px;line-height:4.5px;color:#777;white-space:nowrap;">My Cart</div>
<div class="abs" style="left:1682.5px;top:333.89px;font-size:4.5px;line-height:4.5px;color:#777;white-space:nowrap;">Checkout</div>
<div class="abs" style="left:1772.5px;top:299.69px;font-size:4.5px;line-height:4.5px;color:#777;white-space:nowrap;">Customer Service</div>
<div class="abs" style="left:1772.5px;top:311.09px;font-size:4.5px;line-height:4.5px;color:#777;white-space:nowrap;">Store Locator</div>
<div class="abs" style="left:1772.5px;top:322.49px;font-size:4.5px;line-height:4.5px;color:#777;white-space:nowrap;">Wholesale</div>
<div class="abs" style="left:1772.5px;top:333.89px;font-size:4.5px;line-height:4.5px;color:#777;white-space:nowrap;">Career</div>
<div class="abs" style="left:1483px;top:354.5px;width:370px;height:1px;background:#eee;"></div>
<div class="abs" style="left:1487px;top:362.78px;font-size:3.8px;line-height:3.8px;color:#888;white-space:nowrap;">Copyright &#169; 2022 GemThemes. All Rights Reserved.</div>
<div class="abs" style="left:1780px;top:363px;width:9px;height:2.5px;background:#5a7ac8;opacity:.7"></div>
<div class="abs" style="left:1793.5px;top:361px;width:11px;height:6px;background:#fff;border:0.5px solid #ccc"></div>
<div class="abs" style="left:1795px;top:362.5px;width:8px;height:2.5px;background:#2a3f9a;"></div>
<div class="abs" style="left:1808px;top:361px;width:11px;height:6.5px;background:#f5b030;border-radius:1px"></div>
<div class="abs" style="left:1808.5px;top:361.5px;width:6px;height:5.5px;background:#e0302a;border-radius:50%"></div>
<div class="abs" style="left:1823px;top:363px;width:8px;height:2.5px;background:#666;opacity:.6"></div>
<div class="abs" style="left:1837px;top:363px;width:8px;height:2.5px;background:#888;opacity:.5"></div>
<div class="card" style="left:1446px;top:472px;height:228px"><div class="img" style="height:158px;background:#fff"></div><div class="lab" style="top:158px;height:70px"><span>Subscribe / Newsletter - Style 4</span></div></div>
<div class="abs" style="left:1267.5px;width:800px;text-align:center;top:499.80px;font-size:15px;line-height:15px;color:#2a2a2a;font-weight:bold;white-space:nowrap;">Subscribe to newsletter</div>
<div class="abs" style="left:1267.5px;width:800px;text-align:center;top:522.74px;font-size:4.8px;line-height:4.8px;color:#777;white-space:nowrap;">Sign up to be the first to hear about exclusive deals, special offers and</div>
<div class="abs" style="left:1267.5px;width:800px;text-align:center;top:530.44px;font-size:4.8px;line-height:4.8px;color:#777;white-space:nowrap;">upcoming collections</div>
<div class="abs" style="left:1573.5px;top:552px;width:190px;height:15px;background:#fff;border:1px solid #f2f2f2;border-radius:8px"></div>
<div class="abs" style="left:1582px;top:557.27px;font-size:5px;line-height:5px;color:#aaa;white-space:nowrap;">Enter your email</div>
<div class="abs" style="left:1356px;width:800px;text-align:center;top:556.72px;font-size:6px;line-height:6px;color:#333;white-space:nowrap;">&#8594;</div>
</body></html>
